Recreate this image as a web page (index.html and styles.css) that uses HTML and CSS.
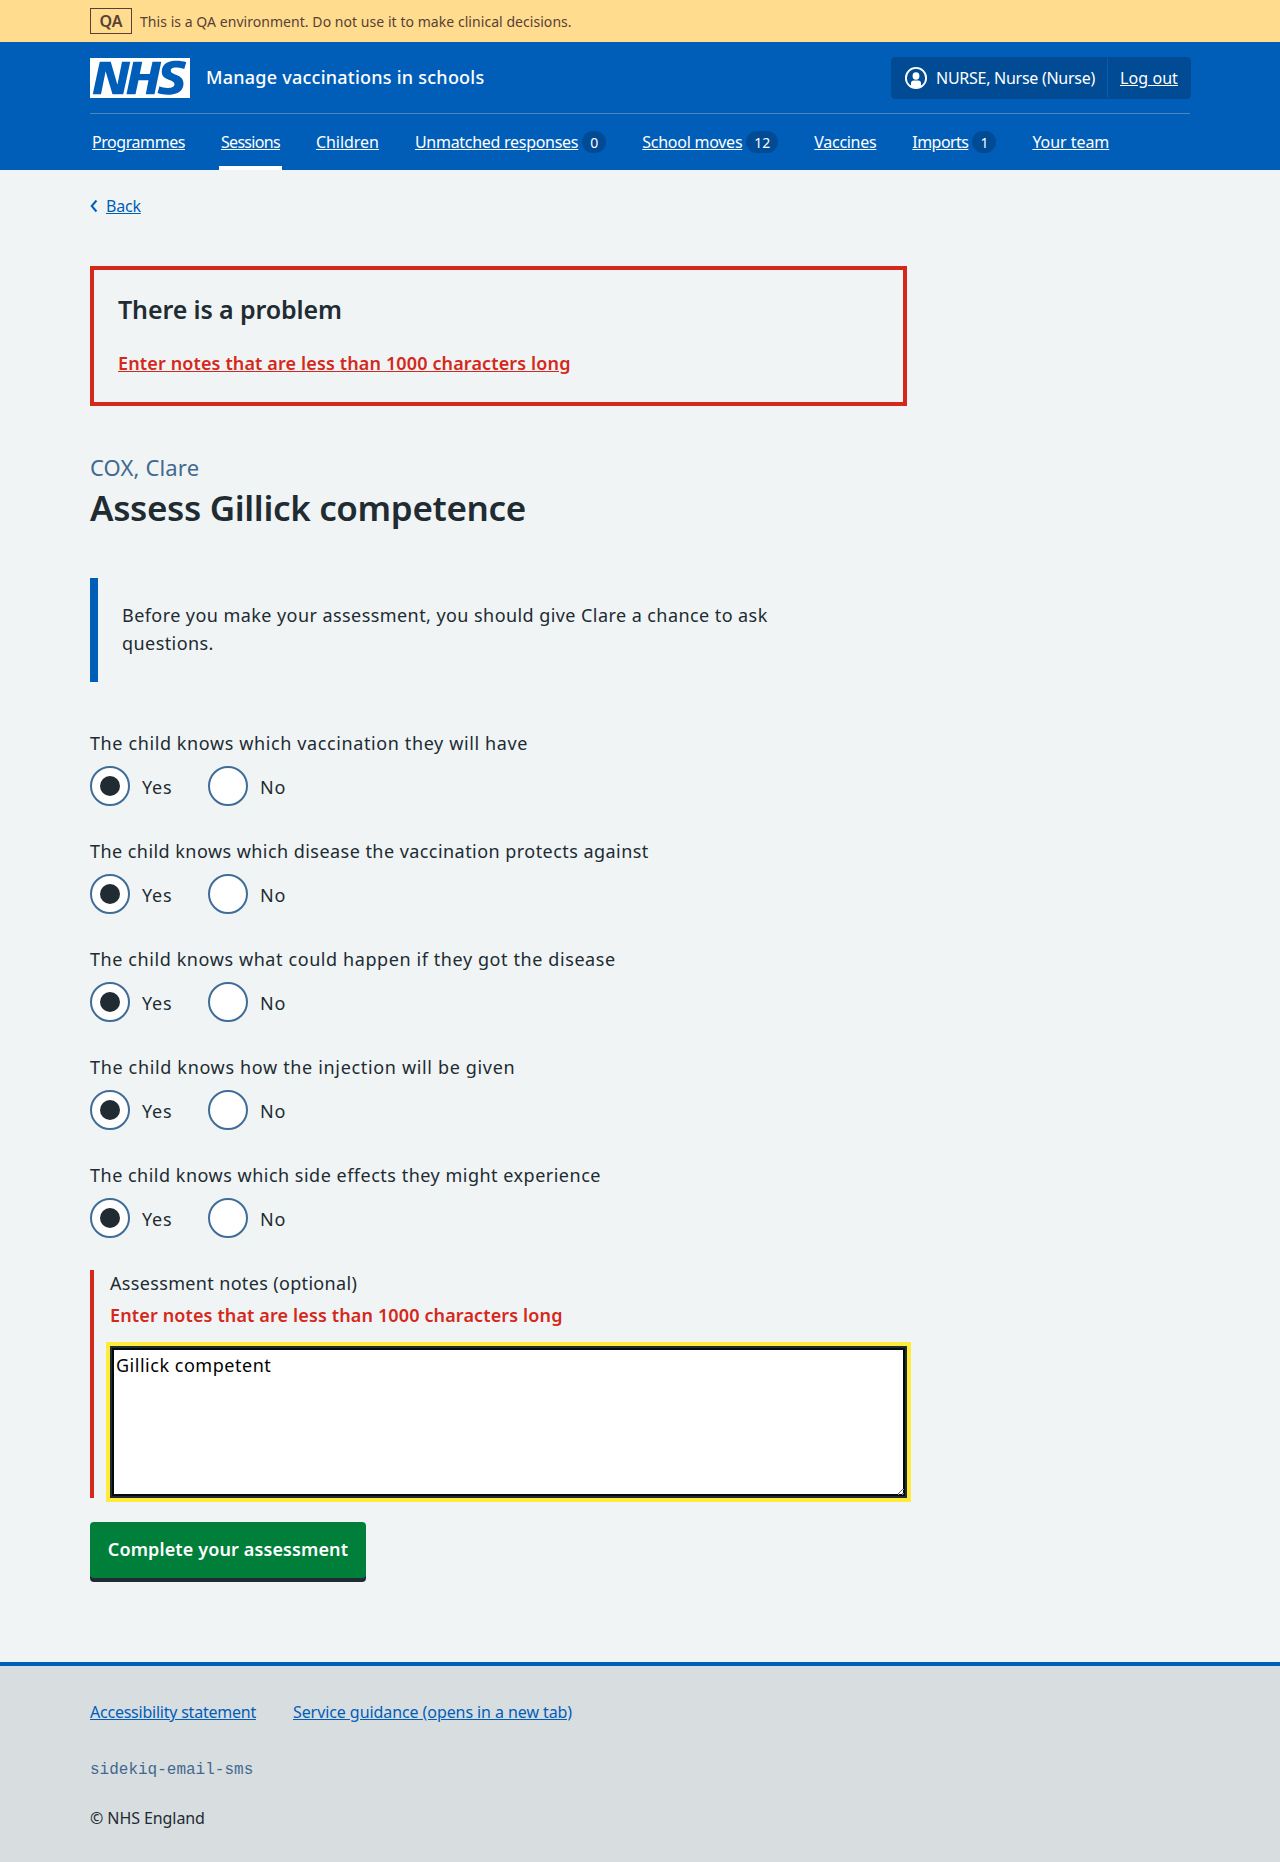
FILE: index.html
```html
<!DOCTYPE html>
<html lang="en">
<head>
<meta charset="utf-8">
<title>Assess Gillick competence - Manage vaccinations in schools</title>
<link rel="stylesheet" href="styles.css">
</head>
<body>
<div class="environment">
  <div class="container environment__inner">
    <strong class="environment__tag">QA</strong>
    <span class="environment__text">This is a QA environment. Do not use it to make clinical decisions.</span>
  </div>
</div>

<header class="header">
  <div class="container">
    <div class="header__top">
      <svg class="header__logo" viewBox="0 0 200 80" width="100" height="40" role="img" aria-label="NHS">
        <path fill="#fff" d="M200 0v80H0V0h200Zm-27.5 5.5c-14.5 0-29 5-29 22 0 10.2 7.700 13.500 14.700 16.300l.7.300c5.400 2 10.100 3.900 10.100 8.400 0 6.500-8.500 7.500-14 7.500s-12.500-1.500-16-3.500L135 70c5.500 2 13.500 3.500 20 3.500 15.500 0 32-4.500 32-22.500 0-19.500-25.500-16.500-25.500-25.500 0-5.500 5.500-6.500 12.500-6.500a35 35 0 0 1 14.500 3l4-13.500c-4.500-2-12-3-20-3Zm-131 2h-22l-14 65H22l9-45h.5l13.500 45h21.500l14-65H64l-9 45h-.5l-13-45Zm63 0h-18l-13.500 65h18l6-28H117l-5.500 28H129l13.500-65H125L119.500 32h-20l5-24.500Z"/>
      </svg>
      <span class="header__service">Manage vaccinations in schools</span>
      <div class="account">
        <span class="account__user">
          <svg class="account__icon" viewBox="0 0 24 24" width="24" height="24" aria-hidden="true">
            <circle cx="12" cy="12" r="10.100" fill="none" stroke="#fff" stroke-width="1.900"/>
            <path fill="#fff" d="M12 6.200a3.400 3.400 0 0 1 3.400 3.400v.7a3.400 3.400 0 0 1-6.800 0v-.7A3.400 3.400 0 0 1 12 6.200ZM9.800 14.600h4.400a2.800 2.800 0 0 1 2.800 2.800v3a9.800 9.800 0 0 1-10 0v-3a2.800 2.800 0 0 1 2.800-2.800Z"/>
          </svg>
          <span class="account__name">NURSE, Nurse (Nurse)</span>
        </span>
        <a class="account__logout" href="#">Log out</a>
      </div>
    </div>
    <nav class="nav">
      <div class="nav__item"><a class="nav__link nav__link--programmes" href="#">Programmes</a></div>
      <div class="nav__item nav__item--current"><a class="nav__link nav__link--sessions" href="#">Sessions</a></div>
      <div class="nav__item"><a class="nav__link nav__link--children" href="#">Children</a></div>
      <div class="nav__item"><a class="nav__link nav__link--responses" href="#">Unmatched responses</a><span class="count">0</span></div>
      <div class="nav__item"><a class="nav__link nav__link--moves" href="#">School moves</a><span class="count">12</span></div>
      <div class="nav__item"><a class="nav__link nav__link--vaccines" href="#">Vaccines</a></div>
      <div class="nav__item"><a class="nav__link nav__link--imports" href="#">Imports</a><span class="count">1</span></div>
      <div class="nav__item"><a class="nav__link nav__link--team" href="#">Your team</a></div>
    </nav>
  </div>
</header>

<main class="container main">
  <div class="back">
    <svg class="back__icon" viewBox="0 0 8 14" width="8" height="14" aria-hidden="true"><path d="M6.500 1.500 1.700 7l4.800 5.500" fill="none" stroke="#005eb8" stroke-width="2"/></svg>
    <a class="back__link" href="#">Back</a>
  </div>

  <div class="column">
    <section class="error-summary">
      <h2 class="error-summary__title">There is a problem</h2>
      <a class="error-summary__link" href="#notes">Enter notes that are less than 1000 characters long</a>
    </section>

    <span class="caption">COX, Clare</span>
    <h1 class="title">Assess Gillick competence</h1>

    <div class="inset">Before you make your assessment, you should give Clare a chance to ask questions.</div>

    <div class="question">
      <div class="question__legend question__legend--vaccination">The child knows which vaccination they will have</div>
      <div class="radios">
        <div class="radio"><span class="radio__circle radio__circle--checked"></span><span class="radio__label">Yes</span></div>
        <div class="radio"><span class="radio__circle"></span><span class="radio__label">No</span></div>
      </div>
    </div>
    <div class="question">
      <div class="question__legend question__legend--disease">The child knows which disease the vaccination protects against</div>
      <div class="radios">
        <div class="radio"><span class="radio__circle radio__circle--checked"></span><span class="radio__label">Yes</span></div>
        <div class="radio"><span class="radio__circle"></span><span class="radio__label">No</span></div>
      </div>
    </div>
    <div class="question">
      <div class="question__legend question__legend--outcome">The child knows what could happen if they got the disease</div>
      <div class="radios">
        <div class="radio"><span class="radio__circle radio__circle--checked"></span><span class="radio__label">Yes</span></div>
        <div class="radio"><span class="radio__circle"></span><span class="radio__label">No</span></div>
      </div>
    </div>
    <div class="question">
      <div class="question__legend question__legend--injection">The child knows how the injection will be given</div>
      <div class="radios">
        <div class="radio"><span class="radio__circle radio__circle--checked"></span><span class="radio__label">Yes</span></div>
        <div class="radio"><span class="radio__circle"></span><span class="radio__label">No</span></div>
      </div>
    </div>
    <div class="question">
      <div class="question__legend question__legend--effects">The child knows which side effects they might experience</div>
      <div class="radios">
        <div class="radio"><span class="radio__circle radio__circle--checked"></span><span class="radio__label">Yes</span></div>
        <div class="radio"><span class="radio__circle"></span><span class="radio__label">No</span></div>
      </div>
    </div>

    <div class="notes">
      <label class="notes__label" for="notes">Assessment notes (optional)</label>
      <span class="notes__error">Enter notes that are less than 1000 characters long</span>
      <textarea class="notes__input" id="notes">Gillick competent</textarea>
    </div>

    <button class="button" type="submit">Complete your assessment</button>
  </div>
</main>

<footer class="footer">
  <div class="container">
    <div class="footer__links">
      <a class="footer__link footer__link--accessibility" href="#">Accessibility statement</a>
      <a class="footer__link footer__link--guidance" href="#">Service guidance (opens in a new tab)</a>
    </div>
    <div class="footer__release">sidekiq-email-sms</div>
    <div class="footer__copyright">© NHS England</div>
  </div>
</footer>
</body>
</html>
```
FILE: styles.css
```css
* { box-sizing: border-box; }

body {
  margin: 0;
  background: #f0f4f5;
  color: #212b32;
  font: 400 18px/28px "Noto Sans", "Open Sans", sans-serif;
}

h1, h2 { margin: 0; }

.container { width: 1100px; margin: 0 auto; }

/* Environment banner */
.environment { background: #ffdc8e; color: #594036; }
.environment__inner { display: flex; align-items: center; height: 42px; }
.environment__tag {
  width: 42px;
  height: 26px;
  border: 1px solid #594036;
  font-size: 16px;
  font-weight: 600;
  line-height: 25px;
  text-align: center;
}
.environment__text { margin: 2px 0 0 8px; font-size: 14px; letter-spacing: 0.05px; line-height: 24px; }

/* Header */
.header { background: #005eb8; color: #fff; font-size: 16px; }
.header a { color: #fff; }
.header__top {
  display: flex;
  align-items: center;
  height: 72px;
  border-bottom: 1px solid #4886c4;
}
.header__logo { display: block; margin-top: 1px; }
.header__service { margin: 0 0 1px 16px; font-size: 18px; font-weight: 500; letter-spacing: 0.24px; }

.account {
  display: flex;
  align-items: center;
  width: 300px;
  height: 42px;
  margin: 1px -1px 0 auto;
  border: 1px solid #004b93;
  border-radius: 4px;
  background: #004b93;
}
.account__user {
  display: flex;
  align-items: center;
  width: 216px;
  height: 40px;
  padding-left: 12px;
  border-right: 1px solid #005eb8;
}
.account__name { margin-left: 8px; letter-spacing: -0.27px; white-space: nowrap; }
.account__logout { margin-left: 12px; letter-spacing: 0.08px; }

.nav { display: flex; gap: 32px; }
.nav__item {
  display: flex;
  align-items: center;
  height: 56px;
  padding: 4px 2px 0;
  border-bottom: 4px solid transparent;
  white-space: nowrap;
}
.nav__item--current { border-bottom-color: #fff; }
.nav__link--programmes { letter-spacing: -0.44px; }
.nav__link--sessions { letter-spacing: -0.69px; }
.nav__link--children { letter-spacing: -0.04px; }
.nav__link--responses { letter-spacing: -0.28px; }
.nav__link--moves { letter-spacing: -0.26px; }
.nav__link--vaccines { letter-spacing: -0.29px; }
.nav__link--imports { letter-spacing: -0.56px; }
.nav__link--team { letter-spacing: -0.06px; }
.count {
  height: 22px;
  margin-left: 4px;
  padding: 0 8px;
  border-radius: 11px;
  background: #004b93;
  font-size: 14px;
  line-height: 23px;
}

/* Page content */
.main { height: 1492px; padding-top: 24px; }
.column { width: 817px; }

.back { display: flex; align-items: center; height: 24px; margin-bottom: 48px; font-size: 16px; line-height: 24px; }
.back__link { margin-left: 8px; color: #005eb8; letter-spacing: -0.2px; }

.error-summary { height: 140px; padding: 23px 24px 24px; border: 4px solid #d5281b; }
.error-summary__title { margin-bottom: 24px; font-size: 25px; font-weight: 600; line-height: 32px; letter-spacing: -0.12px; }
.error-summary__link { display: block; color: #d5281b; font-weight: 600; letter-spacing: 0.13px; }

.caption { display: block; margin-top: 46px; color: #41698f; font-size: 22px; line-height: 30px; letter-spacing: 0.15px; }
.title { margin-top: 4px; font-size: 35px; font-weight: 600; line-height: 44px; letter-spacing: -0.35px; }

.inset {
  height: 104px;
  margin: 48px 0 47px;
  padding: 23px 100px 25px 24px;
  border-left: 8px solid #005eb8;
  letter-spacing: 0.43px;
}

.question { margin-bottom: 31px; }
.question__legend { margin-bottom: 9px; }
.question__legend--vaccination { letter-spacing: 0.61px; }
.question__legend--disease { letter-spacing: 0.45px; }
.question__legend--outcome { letter-spacing: 0.59px; }
.question__legend--injection { letter-spacing: 0.66px; }
.question__legend--effects { letter-spacing: 0.5px; }

.radios { display: flex; }
.radio { display: flex; align-items: center; width: 118px; }
.radio__circle {
  display: flex;
  align-items: center;
  justify-content: center;
  width: 40px;
  height: 40px;
  border: 2px solid #3f6d98;
  border-radius: 50%;
  background: #fff;
}
.radio__circle--checked::before { content: ""; width: 20px; height: 20px; border-radius: 50%; background: #212b32; }
.radio__label { margin: 2px 0 0 12px; letter-spacing: 0.8px; }

.notes { height: 228px; margin-top: 32px; padding-left: 16px; border-left: 4px solid #d5281b; }
.notes__label { display: block; line-height: 26px; letter-spacing: 0.34px; }
.notes__error { display: block; margin: 5px 0 17px; color: #d5281b; font-weight: 600; letter-spacing: 0.13px; }
.notes__input {
  display: block;
  width: 797px;
  height: 152px;
  margin: 0;
  padding: 3px 4px;
  border: 2px solid #212b32;
  outline: 4px solid #ffeb3b;
  box-shadow: inset 0 0 0 2px #000b0c;
  background: #fff;
  color: #000;
  font: inherit;
  letter-spacing: 0.52px;
  resize: vertical;
}

.button {
  display: block;
  width: 276px;
  height: 56px;
  margin-top: 24px;
  padding: 0 0 2px;
  border: 0;
  border-radius: 4px;
  background: #007f3b;
  box-shadow: 0 4px 0 #212b32;
  color: #fff;
  font: inherit;
  font-weight: 600;
  letter-spacing: 0.12px;
}

/* Footer */
.footer { height: 200px; padding-top: 34px; border-top: 4px solid #005eb8; background: #d8dde0; font-size: 16px; line-height: 24px; }
.footer__links { display: flex; gap: 37px; }
.footer__link { color: #005eb8; }
.footer__link--accessibility { letter-spacing: -0.23px; }
.footer__link--guidance { letter-spacing: -0.08px; }
.footer__release { margin-top: 34px; color: #41698f; font-family: "Liberation Mono", monospace; }
.footer__copyright { margin-top: 24px; letter-spacing: -0.08px; }
```
